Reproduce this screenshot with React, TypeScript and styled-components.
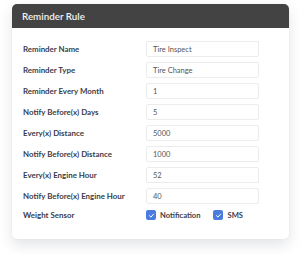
import React from 'react'
import styled, { createGlobalStyle } from 'styled-components'

const GlobalStyle = createGlobalStyle`
  body {
    margin: 0;
    background: #ffffff;
    font-family: Lato, "Open Sans", sans-serif;
  }
`

const Page = styled.div`
  width: 300px;
  height: 254px;
  padding: 4px 11px 0 12px;
  box-sizing: border-box;
`

const Card = styled.div`
  background: #fff;
  border-radius: 5px;
  box-shadow: 0 6px 14px rgba(40, 50, 70, 0.13), 0 0 2px rgba(0, 0, 0, 0.06);
  overflow: hidden;
`

const Header = styled.div`
  height: 24px;
  background: #434343;
  color: #f2f2f2;
  display: flex;
  align-items: center;
  padding-left: 10px;
  font-size: 9.8px;
  font-weight: 600;
`

const Body = styled.div`
  display: grid;
  grid-template-columns: 123px 113px;
  row-gap: 5px;
  padding: 13px 11px 18px 11px;
  align-items: center;
`

const Label = styled.div`
  font-size: 7.9px;
  font-weight: 700;
  color: #3a3d4a;
`

const Field = styled.div`
  height: 16px;
  box-sizing: border-box;
  border: 1px solid #ececec;
  border-radius: 2px;
  padding-left: 6px;
  display: flex;
  align-items: center;
  font-size: 7.5px;
  color: #555;
`

const Checks = styled.div`
  display: flex;
  align-items: center;
  gap: 13px;
  height: 12px;
`

const Check = styled.label`
  display: flex;
  align-items: center;
  gap: 4px;
  font-size: 7.6px;
  font-weight: 700;
  color: #3a3d4a;
`

const Box = styled.span`
  width: 10px;
  height: 10px;
  border-radius: 2px;
  background: #4a7ce0;
  display: flex;
  align-items: center;
  justify-content: center;
`

const rows: [string, string][] = [
  ['Reminder Name', 'Tire Inspect'],
  ['Reminder Type', 'Tire Change'],
  ['Reminder Every Month', '1'],
  ['Notify Before(x) Days', '5'],
  ['Every(x) Distance', '5000'],
  ['Notify Before(x) Distance', '1000'],
  ['Every(x) Engine Hour', '52'],
  ['Notify Before(x) Engine Hour', '40'],
]

const Tick = () => (
  <Box>
    <svg width="7" height="7" viewBox="0 0 10 10">
      <path d="M2 5.2 L4.2 7.3 L8 3" fill="none" stroke="#fff" strokeWidth="1.4" strokeLinecap="round" strokeLinejoin="round" />
    </svg>
  </Box>
)

export default function App() {
  return (
    <Page>
      <GlobalStyle />
      <Card>
        <Header>Reminder Rule</Header>
        <Body>
          {rows.map(([label, value]) => (
            <React.Fragment key={label}>
              <Label>{label}</Label>
              <Field>{value}</Field>
            </React.Fragment>
          ))}
          <Label>Weight Sensor</Label>
          <Checks>
            <Check><Tick />Notification</Check>
            <Check><Tick />SMS</Check>
          </Checks>
        </Body>
      </Card>
    </Page>
  )
}
